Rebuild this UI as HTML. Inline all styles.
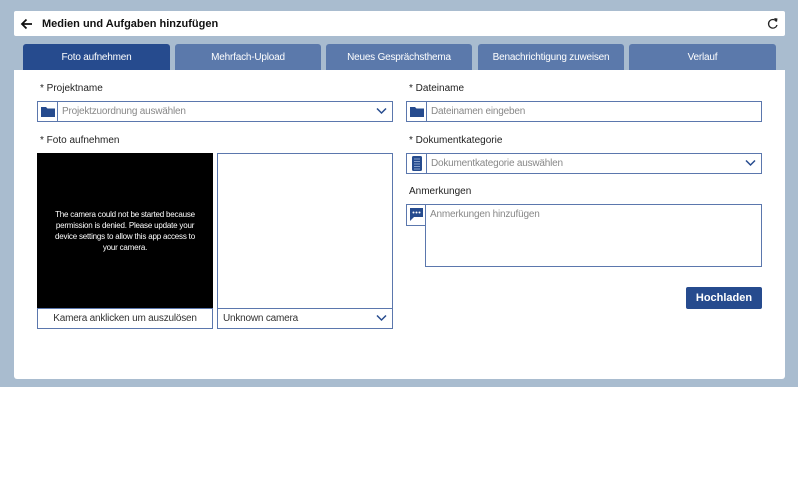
<!DOCTYPE html>
<html><head><meta charset="utf-8"><style>
*{box-sizing:border-box;margin:0;padding:0}
body{width:800px;height:500px;background:#fff;font-family:"Liberation Sans",sans-serif;position:relative;overflow:hidden}
.bg{position:absolute;left:0;top:0;width:798px;height:387px;background:#a9bccf}
.abs{position:absolute}
.hdr{left:14px;top:11px;width:771px;height:25px;background:#fff;border-radius:2px}
.tab{top:44px;height:27px;background:#5b79ab;color:#fff;font-size:10px;text-align:center;line-height:28px;border-radius:3px 3px 0 0;letter-spacing:-0.2px}
.panel{left:14px;top:70px;width:771px;height:309px;background:#fff;border-radius:0 0 3px 3px}
.lbl{font-size:10px;color:#222}
.inp{border:1px solid #5b77ad;background:#fff;height:21px;font-size:10px;color:#888;line-height:20px;letter-spacing:-0.2px}
.ico{position:absolute;left:0;top:0;width:20px;height:19px;border-right:1px solid #5b77ad}
.chev{position:absolute;right:5px;top:5px}
</style></head><body>
<div class="bg"></div>
<div class="abs hdr">
<svg class="abs" style="left:6px;top:7px" width="13" height="12" viewBox="0 0 13 12"><path d="M12 6H2M6.5 1.5L2 6l4.5 4.5" stroke="#111" stroke-width="1.8" fill="none"/></svg>
<div class="abs" style="left:28px;top:7px;font-size:11px;font-weight:bold;color:#111">Medien und Aufgaben hinzufügen</div>
<svg class="abs" style="left:753px;top:6px" width="12" height="13" viewBox="0 0 12 13"><path d="M9.5 4.5A4.3 4.3 0 1 0 10 8" stroke="#222" stroke-width="1.3" fill="none"/><path d="M7 1l3.5 0.5-0.5 3.5z" fill="#222"/></svg>
</div>
<div class="abs tab" style="left:23px;width:147px;background:#264b8e">Foto aufnehmen</div>
<div class="abs tab" style="left:175px;width:146px">Mehrfach-Upload</div>
<div class="abs tab" style="left:326px;width:146px">Neues Gesprächsthema</div>
<div class="abs tab" style="left:478px;width:146px">Benachrichtigung zuweisen</div>
<div class="abs tab" style="left:629px;width:147px">Verlauf</div>
<div class="abs panel"></div>

<div class="abs lbl" style="left:40px;top:83px">* Projektname</div>
<div class="abs inp" style="left:37px;top:101px;width:356px"><div class="ico"><svg style="margin:4px 0 0 3px" width="14" height="11" viewBox="0 0 14 11"><path d="M0 1h5l1.5 1.5H14V11H0z" fill="#264b8e"/></svg></div><span style="position:absolute;left:24px">Projektzuordnung auswählen</span><svg class="chev" width="11" height="8" viewBox="0 0 11 8"><path d="M1 1.5l4.5 4.5 4.5-4.5" stroke="#264b8e" stroke-width="1.5" fill="none"/></svg></div>

<div class="abs lbl" style="left:409px;top:83px">* Dateiname</div>
<div class="abs inp" style="left:406px;top:101px;width:356px"><div class="ico"><svg style="margin:4px 0 0 3px" width="14" height="11" viewBox="0 0 14 11"><path d="M0 1h5l1.5 1.5H14V11H0z" fill="#264b8e"/></svg></div><span style="position:absolute;left:24px">Dateinamen eingeben</span></div>

<div class="abs lbl" style="left:40px;top:135px">* Foto aufnehmen</div>
<div class="abs" style="left:37px;top:153px;width:176px;height:155px;background:#000;color:#fff;font-size:8px;text-align:center;padding:56px 10px 0;line-height:11px;letter-spacing:-0.2px">The camera could not be started because permission is denied. Please update your device settings to allow this app access to your camera.</div>
<div class="abs" style="left:37px;top:308px;width:176px;height:21px;border:1px solid #5b77ad;font-size:10px;color:#333;text-align:center;line-height:20px;letter-spacing:-0.2px">Kamera anklicken um auszulösen</div>
<div class="abs" style="left:217px;top:153px;width:176px;height:156px;border:1px solid #5b77ad"></div>
<div class="abs inp" style="left:217px;top:308px;width:176px;color:#333"><span style="position:absolute;left:5px">Unknown camera</span><svg class="chev" width="11" height="8" viewBox="0 0 11 8"><path d="M1 1.5l4.5 4.5 4.5-4.5" stroke="#264b8e" stroke-width="1.5" fill="none"/></svg></div>

<div class="abs lbl" style="left:409px;top:135px">* Dokumentkategorie</div>
<div class="abs inp" style="left:406px;top:153px;width:356px"><div class="ico"><svg style="margin:2px 0 0 5px" width="10" height="15" viewBox="0 0 10 15"><rect width="10" height="15" rx="1.5" fill="#264b8e"/><path d="M2 3h6M2 5.5h6M2 8h6M2 10.5h6M2 13h6" stroke="#a9bde0" stroke-width="0.8"/></svg></div><span style="position:absolute;left:24px">Dokumentkategorie auswählen</span><svg class="chev" width="11" height="8" viewBox="0 0 11 8"><path d="M1 1.5l4.5 4.5 4.5-4.5" stroke="#264b8e" stroke-width="1.5" fill="none"/></svg></div>

<div class="abs lbl" style="left:409px;top:186px">Anmerkungen</div>
<div class="abs" style="left:406px;top:204px;width:20px;height:22px;border:1px solid #5b77ad;border-right:none;background:#fff"><svg style="margin:3px 0 0 3px" width="13" height="13" viewBox="0 0 13 13"><path d="M0 0h13v9H4l-4 4z" fill="#264b8e"/><circle cx="3.5" cy="4.5" r="1" fill="#fff"/><circle cx="6.5" cy="4.5" r="1" fill="#fff"/><circle cx="9.5" cy="4.5" r="1" fill="#fff"/></svg></div>
<div class="abs inp" style="left:425px;top:204px;width:337px;height:63px"><span style="position:absolute;left:4px;top:0">Anmerkungen hinzufügen</span></div>

<div class="abs" style="left:686px;top:287px;width:76px;height:22px;background:#264b8e;border-radius:2px;color:#fff;font-size:11px;font-weight:bold;text-align:center;line-height:22px">Hochladen</div>
</body></html>
